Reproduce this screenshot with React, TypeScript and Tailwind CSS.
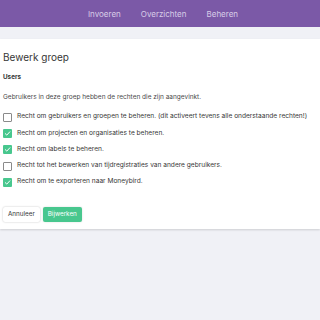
import React from "react";

const rows: { label: string; checked: boolean }[] = [
  { label: "Recht om gebruikers en groepen te beheren. (dit activeert tevens alle onderstaande rechten!)", checked: false },
  { label: "Recht om projecten en organisaties te beheren.", checked: true },
  { label: "Recht om labels te beheren.", checked: true },
  { label: "Recht tot het bewerken van tijdregistraties van andere gebruikers.", checked: false },
  { label: "Recht om te exporteren naar Moneybird.", checked: true },
];

function Box({ checked }: { checked: boolean }) {
  if (checked) {
    return (
      <span className="flex h-[9px] w-[9px] shrink-0 items-center justify-center rounded-[1px] bg-[#48c78e]">
        <svg width="7" height="7" viewBox="0 0 10 10" fill="none">
          <path d="M1.8 5.2 L4 7.3 L8.3 2.6" stroke="white" strokeWidth="1.4" strokeLinecap="round" strokeLinejoin="round" />
        </svg>
      </span>
    );
  }
  return <span className="h-[9px] w-[9px] shrink-0 rounded-[1px] border border-[#8a8a8a] bg-white" />;
}

export default function App() {
  return (
    <div className="h-[320px] w-[320px] overflow-hidden bg-[#f0f1f6]" style={{ fontFamily: "Inter, 'Noto Sans', sans-serif" }}>
      <div className="flex h-[27px] items-center justify-center gap-[20px] bg-[#7b59a7] pl-[6px] text-[8px] text-[#d9cde8]">
        <span>Invoeren</span>
        <span>Overzichten</span>
        <span>Beheren</span>
      </div>
      <div className="h-[12px]" />
      <div className="h-[190px] bg-white px-[3px] shadow-[0_1px_2px_rgba(0,0,0,0.15)]">
        <div className="pt-[12px] text-[10px] leading-[12px] text-[#363636]">Bewerk groep</div>
        <div className="mt-[10px] text-[6.3px] font-bold leading-[8px] text-[#363636]">Users</div>
        <div className="mt-[12px] text-[6.5px] leading-[9px] text-[#4a4a4a]">
          Gebruikers in deze groep hebben de rechten die zijn aangevinkt.
        </div>
        <div className="mt-[7px] flex flex-col">
          {rows.map((r) => (
            <div key={r.label} className="flex h-[16.3px] items-center gap-[5px] text-[6.6px] text-[#363636]">
              <Box checked={r.checked} />
              <span>{r.label}</span>
            </div>
          ))}
        </div>
        <div className="mt-[17px] flex gap-[3px] pl-[-1px]">
          <button className="h-[15px] rounded-[2px] bg-white px-[5px] text-[6.3px] text-[#363636] shadow-[0_0_2px_rgba(0,0,0,0.25)]">
            Annuleer
          </button>
          <button className="h-[15px] rounded-[2px] bg-[#48c78e] px-[5px] text-[6.3px] text-white shadow-[0_0_2px_rgba(0,0,0,0.15)]">
            Bijwerken
          </button>
        </div>
      </div>
    </div>
  );
}
